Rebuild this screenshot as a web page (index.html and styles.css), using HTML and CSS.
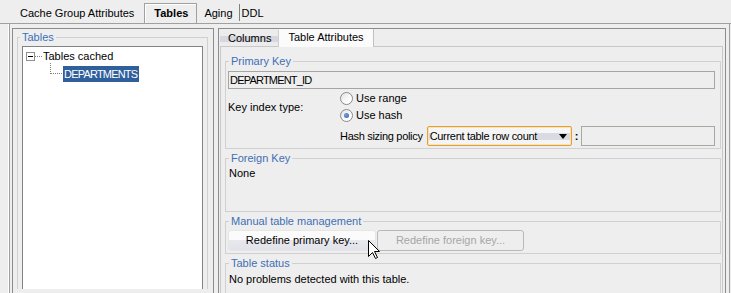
FILE: index.html
```html
<!DOCTYPE html>
<html>
<head>
<meta charset="utf-8">
<title>Tables</title>
<link rel="stylesheet" href="styles.css">
</head>
<body>
<div class="topbar">
  <span class="ttab first">Cache Group Attributes</span>
  <span class="ttab sel">Tables</span>
  <span class="ttab aging">Aging</span>
  <span class="tsep"></span>
  <span class="ttab ddl">DDL</span>
</div>
<div class="main">
  <div class="lp">
    <fieldset class="fs lfs">
      <legend>Tables</legend>
      <div class="tree">
        <div class="node root"><span class="exp"></span><span class="dots"></span><span>Tables cached</span></div>
        <div class="node child"><span class="conn"></span><span class="selnode caps">DEPARTMENTS</span></div>
      </div>
    </fieldset>
  </div>
  <div class="rp">
    <div class="tabs">
      <span class="tab">Columns</span>
      <span class="tab active">Table Attributes</span>
    </div>
    <div class="content">
      <fieldset class="fs pk">
        <legend>Primary Key</legend>
        <div class="tf"><span class="caps">DEPARTMENT_ID</span></div>
        <div class="keygrid">
          <div class="klabel">Key index type:</div>
          <div class="radio"><span class="rb"></span><span>Use range</span></div>
          <div class="radio"><span class="rb on"></span><span>Use hash</span></div>
          <div class="hashrow">
            <span class="hlabel">Hash sizing policy</span>
            <div class="select"><span class="seltext">Current table row count</span><span class="arrow"></span></div>
            <span class="colon">:</span>
            <div class="tf2"></div>
          </div>
        </div>
      </fieldset>
      <fieldset class="fs fk">
        <legend>Foreign Key</legend>
        <div class="fkbody">None</div>
      </fieldset>
      <fieldset class="fs mt">
        <legend>Manual table management</legend>
        <div class="btnrow">
          <div class="btn b1">Redefine primary key...</div>
          <div class="btn b2">Redefine foreign key...</div>
        </div>
      </fieldset>
      <fieldset class="fs ts">
        <legend>Table status</legend>
        <div class="tsbody">No problems detected with this table.</div>
      </fieldset>
    </div>
  </div>
</div>
<svg class="cursor" width="13" height="20" viewBox="0 0 13 20">
  <path d="M0.5 0.5 L0.5 16.5 L4.5 12.5 L7.5 18.5 L9.5 17.5 L6.5 11.5 L11.5 11.5 Z" fill="#fff" stroke="#000" stroke-width="1"/>
</svg>
</body>
</html>
```

FILE: styles.css
```css
html, body {
  margin: 0;
  padding: 0;
}
body {
  background: #eeeeee;
  font-family: "Liberation Sans", Arial, sans-serif;
  font-size: 11px;
  line-height: 13px;
  color: #000;
  width: 731px;
  height: 293px;
  overflow: hidden;
  position: relative;
}
.caps {
  letter-spacing: -0.8px;
}

/* top tab strip */
.topbar {
  display: flex;
  align-items: flex-end;
  height: 23px;
  border-bottom: 1px solid #a0a0a0;
}
.ttab {
  height: 20px;
  line-height: 20px;
  box-sizing: border-box;
}
.ttab.first {
  margin-left: 20px;
  margin-right: 10px;
}
.ttab.sel {
  font-weight: bold;
  padding: 0 8px 0 9px;
  border: 1px solid #a0a0a0;
  border-bottom: none;
  box-shadow: inset 1px 1px 0 #fff;
  line-height: 19px;
}
.ttab.aging {
  margin-left: 7px;
}
.tsep {
  width: 1px;
  height: 17px;
  background: #808080;
  margin: 0 2px 2px 6px;
}

/* main frame */
.main {
  margin-left: 8px;
  width: 722px;
  height: 269px;
  box-sizing: border-box;
  border-left: 1px solid #fff;
  border-right: 1px solid #a0a0a0;
  box-shadow: inset 1px 0 0 #a0a0a0;
  padding: 4px 3px 0 3px;
  display: flex;
  gap: 4px;
  overflow: hidden;
}

/* left panel */
.lp {
  width: 202px;
  box-sizing: border-box;
  border: 1px solid #8c8c8c;
  border-bottom: none;
  overflow: hidden;
}
.fs {
  margin: 3px 0 0 0;
  padding: 0 5px 2px 2px;
  border: 1px solid #d0d0d0;
  min-width: 0;
}
.fs legend {
  padding: 0 2px;
  margin-left: 1px;
  color: #3f6fb5;
  line-height: 13px;
}
.lfs {
  margin: 2px 5px 0 4px;
  padding: 0 4px;
  border-bottom: none;
}
.lfs legend {
  margin-left: -2px;
}
.tree {
  margin-top: 2px;
  height: 240px;
  background: #fff;
  border: 1px solid #828282;
  border-bottom: none;
  padding: 2px 0 0 3px;
}
.node {
  display: flex;
  align-items: center;
}
.root {
  height: 14px;
  line-height: 14px;
}
.exp {
  width: 9px;
  height: 9px;
  box-sizing: border-box;
  border: 1px solid #8e8e8e;
  background: linear-gradient(#000, #000) center / 5px 1px no-repeat, #fff;
}
.dots {
  width: 7px;
  height: 0;
  border-top: 1px dotted #808080;
  margin-right: 1px;
}
.child {
  margin-top: 3px;
  height: 16px;
  padding-left: 24px;
  align-items: flex-start;
}
.conn {
  width: 12px;
  height: 11px;
  margin-top: -3px;
  box-sizing: border-box;
  border-left: 1px dotted #808080;
  border-bottom: 1px dotted #808080;
  margin-right: 1px;
}
.selnode {
  background: #30609c;
  color: #fff;
  line-height: 16px;
  padding: 0 2px 0 1px;
}

/* right panel */
.rp {
  flex: 1;
  box-sizing: border-box;
  border: 1px solid #8c8c8c;
  border-bottom: none;
  display: flex;
  flex-direction: column;
  overflow: hidden;
}
.tabs {
  display: flex;
  align-items: flex-end;
  height: 17px;
  padding-left: 1px;
}
.tab {
  height: 16px;
  line-height: 16px;
  box-sizing: border-box;
  padding: 0 7px 0 8px;
  border-right: 1px solid #cfcfcf;
  background: linear-gradient(#ececec 0 38%, #d6d7df 38% 78%, #ececec 78%);
}
.tab.active {
  height: 18px;
  line-height: 17px;
  margin-bottom: -1px;
  padding: 0 9px;
  background: #fbfbfb;
  border-right: 1px solid #c0c0c0;
  position: relative;
  z-index: 1;
}
.content {
  flex: 1;
  margin: 0 2px 0 1px;
  border: 1px solid #c8c8c8;
  border-bottom: none;
  padding: 0 1px 0 4px;
}
.pk {
  margin-top: 8px;
}
.tf {
  margin-top: 3px;
  height: 18px;
  box-sizing: border-box;
  border: 1px solid #a5a5a5;
  padding-left: 1px;
  line-height: 16px;
}
.keygrid {
  display: grid;
  grid-template-columns: 112px 1fr;
  grid-template-rows: 17px 17px auto;
  margin-top: 1px;
}
.klabel {
  grid-row: 1 / 3;
  align-self: center;
}
.radio {
  display: flex;
  align-items: center;
  gap: 3px;
  grid-column: 2;
}
.rb {
  width: 13px;
  height: 13px;
  box-sizing: border-box;
  border-radius: 50%;
  border: 1px solid #8a8a8a;
  background: linear-gradient(135deg, #e2e2e2, #ffffff 70%);
  position: relative;
}
.rb.on::after {
  content: "";
  position: absolute;
  left: 3px;
  top: 3px;
  width: 5px;
  height: 5px;
  border-radius: 50%;
  background: radial-gradient(circle at 40% 40%, #7aa2e0, #2a5cb0);
}
.hashrow {
  grid-column: 2;
  display: flex;
  align-items: center;
  margin-top: 2px;
  height: 20px;
}
.hlabel {
  letter-spacing: -0.3px;
  margin-right: 4px;
}
.select {
  width: 145px;
  height: 20px;
  box-sizing: border-box;
  border: 1px solid #e0a040;
  border-radius: 2px;
  box-shadow: inset 0 0 0 1px #fbe2ad;
  background: linear-gradient(#f6f6f6 0 35%, #d9dae2 35% 72%, #f4f4f4 72%);
  display: flex;
  align-items: center;
  justify-content: space-between;
  padding: 0 4px 0 2px;
}
.seltext {
  background: #f4f4f4;
  line-height: 14px;
  letter-spacing: -0.3px;
}
.arrow {
  width: 0;
  height: 0;
  border-left: 4px solid transparent;
  border-right: 4px solid transparent;
  border-top: 5px solid #000;
}
.colon {
  font-weight: bold;
  margin: 0 3px;
}
.tf2 {
  flex: 1;
  height: 20px;
  box-sizing: border-box;
  border: 1px solid #a8a8a0;
}
.fk {
  padding-top: 2px;
  padding-bottom: 2px;
}
.fkbody {
  height: 42px;
  padding-left: 1px;
}
.btnrow {
  display: flex;
  gap: 1px;
  margin-top: 2px;
}
.btn {
  height: 21px;
  box-sizing: border-box;
  line-height: 19px;
  text-align: center;
  border-radius: 3px;
}
.b1 {
  width: 148px;
  border: 1px solid #e6e6e6;
  background: linear-gradient(#fbfbfb 0 45%, #e8e9ef 45%, #e2e3ea);
}
.b2 {
  width: 147px;
  border: 1px solid #b9b9b9;
  color: #a6a6a6;
  background: #eeeeee;
}
.ts {
  padding-top: 3px;
  border-bottom: none;
}
.tsbody {
  height: 40px;
  padding-left: 1px;
}
.cursor {
  position: absolute;
  left: 368px;
  top: 240px;
}
```
